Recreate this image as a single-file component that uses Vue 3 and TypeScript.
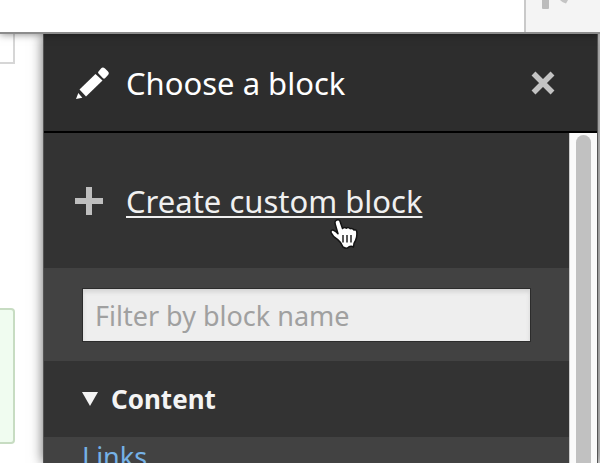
<script setup lang="ts">
import { ref } from 'vue'

const filter = ref('')
const contentOpen = ref(true)
const links = ['Links']
</script>

<template>
  <div class="page">
    <div class="toolbar">
      <button class="tray-toggle" type="button" aria-label="Toggle orientation">
        <svg width="74" height="32" viewBox="0 0 74 32" aria-hidden="true">
          <path d="M16 0h7v8q0 1-1 1h-5q-1 0-1-1z" fill="#bcbcbc" />
          <path d="M34 0h8l-2 3.500q-4-1-6-3.500z" fill="#c4c4c4" />
        </svg>
      </button>
    </div>
    <div class="workspace">
      <main class="canvas">
        <div class="region region-plain"></div>
        <div class="region region-active"></div>
      </main>
      <aside class="dialog" aria-labelledby="dialog-title">
        <header class="dialog-header">
          <svg class="icon" width="34" height="34" viewBox="0 0 34 34" aria-hidden="true">
            <g fill="#fff">
              <path d="M0 33l2.300-6 4 4.700z" />
              <path d="M3.500 23.500L19.500 8l7 6.500L10 30.500z" />
              <path d="M22.500 5.500l2.500-3q1.800-1.800 4 0l2.800 2.800q2 2 0 4l-2.800 3q-1 .8-2 0L22.500 7.500q-1-1 0-2z" />
            </g>
          </svg>
          <h1 id="dialog-title" class="title">Choose a block</h1>
          <button class="close" type="button" aria-label="Close">
            <svg width="24" height="24" viewBox="0 0 24 24" aria-hidden="true">
              <path d="M2.500 2.500l19 19M21.500 2.500l-19 19" stroke="#c3c3c3" stroke-width="5.500" />
            </svg>
          </button>
        </header>
        <div class="dialog-body">
          <div class="content">
            <div class="create">
              <svg class="icon" width="34" height="34" viewBox="0 0 34 34" aria-hidden="true">
                <path d="M3 17h28M17 3v28" stroke="#bfbfbf" stroke-width="6" />
              </svg>
              <a class="create-link" href="#create">Create custom block</a>
              <svg class="pointer" width="30" height="32" viewBox="0 0 30 32" aria-hidden="true">
                <path
                  d="M7 2.500q2.500-1.800 4 .7l2.500 7.300q1.800-1.800 3.800-.3 1.800-1.700 4 .5 2-1 3.700 1.300 2.500-.8 2.800 1.800 .5 5-1.300 8.700-2 2.500-2 6.500-2.500-1.500-5 .2-2 2-5.500-.2-1.500-4.500-5.500-7.700-4.500-2.300-6.500-6.800-.3-2.800 2.500-2.300 2.500 1 4.500 3.500L6 5.500q-.3-2 1-3z"
                  fill="#fff"
                  stroke="#141414"
                  stroke-width="1.500"
                  stroke-linejoin="round"
                />
                <path d="M14 17v7.500M18 17v7.500M22 17v7.500" stroke="#222" stroke-width="1.500" />
              </svg>
            </div>
            <div class="filter">
              <input
                v-model="filter"
                class="filter-input"
                type="text"
                placeholder="Filter by block name"
                aria-label="Filter by block name"
              />
            </div>
            <button
              class="summary"
              type="button"
              :aria-expanded="contentOpen"
              @click="contentOpen = !contentOpen"
            >
              <svg width="16" height="14" viewBox="0 0 16 14" aria-hidden="true">
                <path d="M0 0h16L8 14z" fill="#f4f4f4" />
              </svg>
              <span>Content</span>
            </button>
            <ul v-if="contentOpen" class="links">
              <li v-for="link in links" :key="link">
                <a class="block-link" href="#links">{{ link }}</a>
              </li>
            </ul>
          </div>
          <div class="scrollbar"><div class="thumb"></div></div>
        </div>
      </aside>
    </div>
  </div>
</template>

<style>
body {
  margin: 0;
  background: #fff;
}
</style>

<style scoped>
.page {
  display: flex;
  flex-direction: column;
  height: 100vh;
  overflow: hidden;
  font-family: "Noto Sans", "Open Sans", sans-serif;
}
.toolbar {
  display: flex;
  justify-content: flex-end;
  flex: none;
  height: 32px;
  position: relative;
  z-index: 1;
  background: #fff;
  border-bottom: 2px solid #8c8c8c;
  box-shadow: 0 0 8px rgba(0, 0, 0, 0.5);
}
.tray-toggle {
  width: 76px;
  padding: 0;
  border: 0;
  border-left: 2px solid #c9c9c9;
  background: #f4f4f4;
}
.tray-toggle svg {
  display: block;
}
.workspace {
  display: flex;
  flex: 1;
  min-height: 0;
  padding-right: 2px;
  background: linear-gradient(to left, #ddd 2px, #fff 2px);
}
.canvas {
  display: flex;
  flex-direction: column;
  justify-content: space-between;
  flex: none;
  width: 43px;
  box-sizing: border-box;
  padding: 0 28px 19px 0;
}
.region-plain {
  height: 28px;
  border: solid #d6d6d6;
  border-width: 0 2px 2px 0;
}
.region-active {
  height: 132px;
  border: solid #c7dcc2;
  border-width: 2px 2px 2px 0;
  border-radius: 0 4px 4px 0;
  background: #f0fcf0;
}
.dialog {
  display: flex;
  flex-direction: column;
  flex: 1;
  min-width: 0;
  background: #2d2d2d;
  border: solid #555;
  border-width: 0 1px;
  box-shadow: 0 0 12px rgba(0, 0, 0, 0.6);
  color: #fff;
}
.dialog-header {
  display: flex;
  align-items: center;
  gap: 16px;
  flex: none;
  height: 97px;
  padding: 0 42px 0 32px;
  border-bottom: 2px solid #000;
}
.icon {
  flex: none;
}
.title {
  flex: 1;
  margin: 0;
  font-size: 31px;
  line-height: 40px;
  font-weight: 400;
}
.close {
  display: flex;
  padding: 0;
  border: 0;
  background: none;
}
.dialog-body {
  display: flex;
  flex: 1;
  min-height: 0;
}
.content {
  flex: 1;
  min-width: 0;
  overflow: hidden;
  background: #424242;
}
.create {
  position: relative;
  display: flex;
  align-items: center;
  gap: 20px;
  height: 135px;
  box-sizing: border-box;
  padding: 0 28px;
  background: #333;
}
.create-link {
  color: #f0f0f0;
  font-size: 31px;
  line-height: 40px;
  text-decoration: underline;
  text-decoration-thickness: 2px;
  text-underline-offset: 3px;
}
.pointer {
  position: absolute;
  left: 285px;
  top: 85px;
}
.filter {
  padding: 20px 38px 19px;
}
.filter-input {
  display: block;
  width: 100%;
  height: 54px;
  box-sizing: border-box;
  padding: 0 12px;
  border: 1px solid #2c2c2c;
  border-radius: 0;
  background: #eee;
  box-shadow: inset 0 3px 4px #d4d4d4;
  color: #333;
  font-family: inherit;
  font-size: 27px;
}
.filter-input::placeholder {
  color: #a0a0a0;
  opacity: 1;
}
.summary {
  display: flex;
  align-items: center;
  gap: 13px;
  width: 100%;
  height: 76px;
  padding: 0 38px;
  border: 0;
  background: #333;
  color: #f4f4f4;
  font-family: inherit;
  font-size: 26px;
  line-height: 36px;
  font-weight: 700;
}
.links {
  margin: 0;
  padding: 2px 38px;
  list-style: none;
}
.block-link {
  color: #75b1e6;
  font-size: 27px;
  line-height: 36px;
  text-decoration: none;
}
.scrollbar {
  flex: none;
  width: 28px;
  box-sizing: border-box;
  padding: 2px 6px 0;
  border-left: 1px solid #ccc;
  background: #fafafa;
}
.thumb {
  height: 100%;
  border-radius: 8px 8px 0 0;
  background: #c1c1c1;
}
</style>
